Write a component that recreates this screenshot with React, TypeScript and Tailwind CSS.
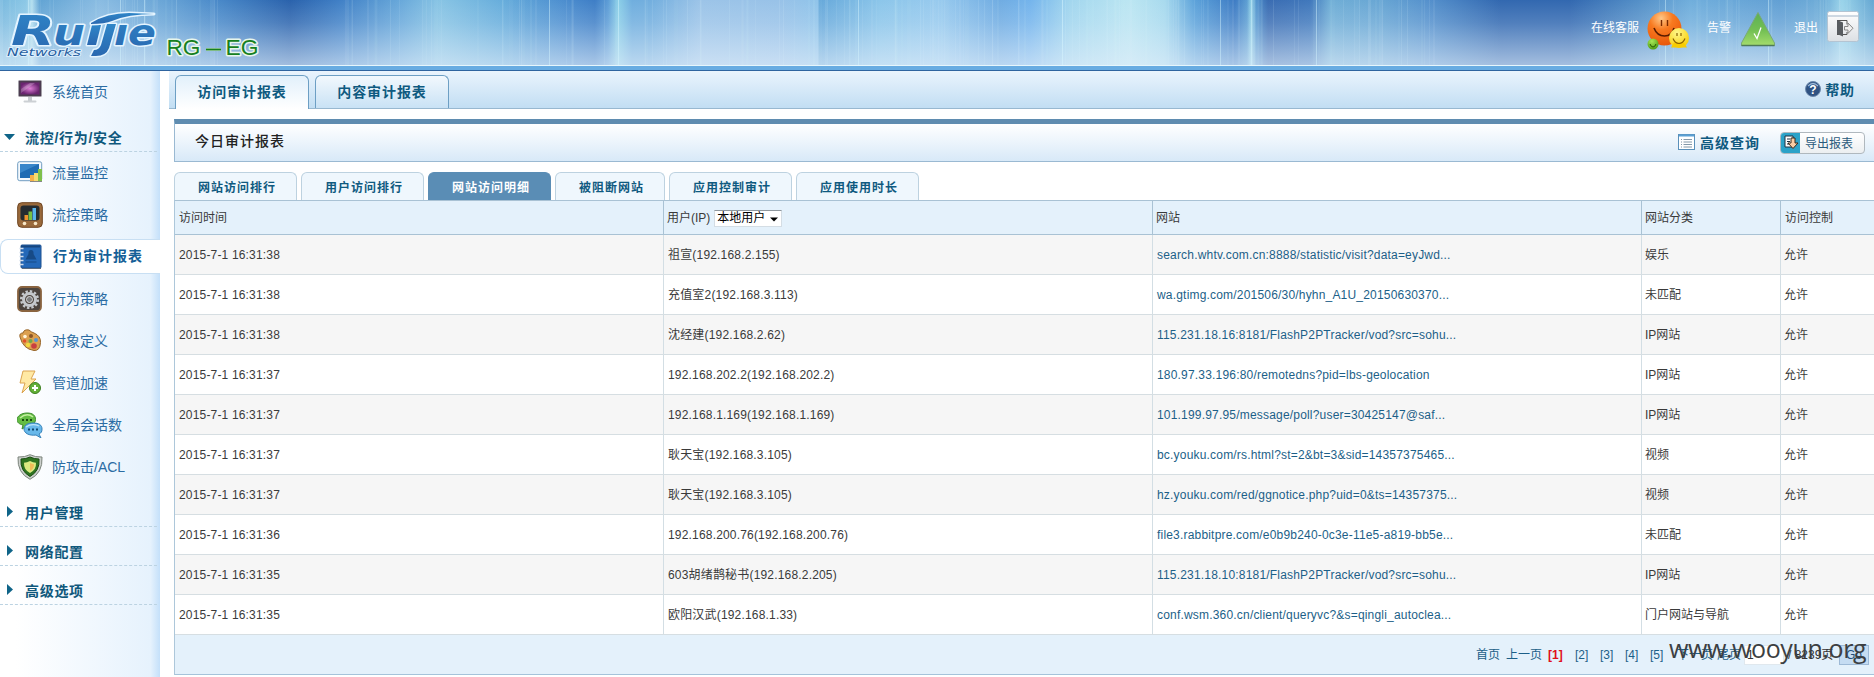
import React from "react";

const FONT = "font-['Liberation_Sans','Noto_Sans_CJK_SC',sans-serif]";

type Stop = [number, string];

const SKY: Stop[] = [
  [0, "#78b8de"], [26, "#8cc8e6"], [32, "#b0dcee"], [40, "#62a4d4"], [100, "#8abce2"], [165, "#68a4d6"], [220, "#4888c8"],
  [290, "#2a62ac"], [340, "#4080c6"], [400, "#68a8da"], [440, "#88c4e4"], [500, "#68aedc"], [560, "#4e90d0"],
  [595, "#3e7ec6"], [608, "#5c9cd6"], [618, "#8cd0e8"], [632, "#70aede"], [650, "#72aede"], [700, "#9cc4e8"],
  [780, "#98c2e8"], [818, "#90c4ea"], [819, "#66a8da"], [880, "#8cc6ea"], [940, "#98caee"], [1000, "#70ace2"],
  [1030, "#74b4ec"], [1070, "#a2d6ee"], [1130, "#bce6f2"], [1165, "#a8daee"], [1195, "#5ca2da"], [1235, "#3e7cc4"],
  [1247, "#5c9ed2"], [1251, "#90d0e6"], [1257, "#4e90cc"], [1268, "#3a6cb2"], [1310, "#4078bc"], [1330, "#70aed6"],
  [1380, "#68a6d4"], [1430, "#5490cc"], [1500, "#3268b0"], [1570, "#3268b0"], [1640, "#5490c8"], [1690, "#70aedc"],
  [1780, "#62a0d4"], [1825, "#70aed8"], [1842, "#9ad4ea"], [1874, "#64a6d2"],
];

const LINES = Array.from({ length: 260 }, (_, i) => {
  const n = Math.abs(Math.sin(i * 12.9898) * 43758.5453) % 1;
  const m = Math.abs(Math.sin(i * 78.233) * 12543.123) % 1;
  return { x: Math.floor(n * 1874), w: m > 0.85 ? 4 : m > 0.5 ? 2 : 1, o: 0.03 + (1 - m) * 0.1 };
}).filter((l) => !(l.x > 235 && l.x < 345) && !(l.x > 1450 && l.x < 1620));

const STRONG = [28, 120, 144, 549, 618, 858, 1062, 1220, 1251, 1316, 1665, 1768];

function HeaderArt() {
  return (
    <svg className="absolute inset-0 h-[65px] w-full" viewBox="0 0 1874 65" preserveAspectRatio="none">
      <defs>
        <linearGradient id="sky" x1="0" x2="1" y1="0" y2="0">
          {SKY.map(([x, c]) => (
            <stop key={x} offset={x / 1874} stopColor={c} />
          ))}
        </linearGradient>
        <linearGradient id="haze" x1="0" x2="0" y1="0" y2="1">
          <stop offset="0" stopColor="#e4f2fc" stopOpacity="0" />
          <stop offset="0.35" stopColor="#e4f0fb" stopOpacity="0.17" />
          <stop offset="1" stopColor="#e4effa" stopOpacity="0.64" />
        </linearGradient>
      </defs>
      <rect width="1874" height="65" fill="url(#sky)" />
      <rect width="1874" height="65" fill="url(#haze)" />
      {LINES.map((l, i) => (
        <rect key={i} x={l.x} y="0" width={l.w} height="65" fill="#e0f8ff" opacity={l.o} />
      ))}
      {STRONG.map((x) => (
        <rect key={x} x={x} y="0" width="1" height="65" fill="#d8f6ff" opacity="0.45" />
      ))}
    </svg>
  );
}

function Logo() {
  const word = {
    fontFamily: "'DejaVu Sans'",
    fontWeight: 700,
    fontStyle: "italic",
  } as const;
  return (
    <svg className="h-[60px] w-[160px] shrink-0" viewBox="0 0 160 60">
      <defs>
        <linearGradient id="lg" x1="0" x2="0" y1="0" y2="1">
          <stop offset="0" stopColor="#2f86c8" />
          <stop offset="1" stopColor="#2a68b0" />
        </linearGradient>
      </defs>
      <g stroke="#e4f4ff" strokeWidth="3" strokeLinejoin="round" paintOrder="stroke" fill="url(#lg)">
        <text {...word} x="11" y="45" fontSize="41" textLength="44" lengthAdjust="spacingAndGlyphs">R</text>
        <text {...word} x="53" y="45" fontSize="35" textLength="32" lengthAdjust="spacingAndGlyphs">u</text>
        <text {...word} x="114" y="45" fontSize="35" textLength="42" lengthAdjust="spacingAndGlyphs">ıe</text>
        <path d="M92 25h9l-5 20h-9z" />
        <path d="M107 24h9l-7 24q-3 8-13 8h-5l3-6q5 0 7-5z" />
        <path d="M91 23q16-10 38-10l25 1q-26 0-42 7-7 3-21 3z" />
      </g>
      <text
        x="7" y="56" fontSize="11" fontFamily="'DejaVu Sans'" fontStyle="italic"
        textLength="74" lengthAdjust="spacingAndGlyphs" fill="#285f9f" stroke="#e4f3ff" strokeWidth="1.500" paintOrder="stroke"
      >
        Networks
      </text>
    </svg>
  );
}

function Smileys() {
  return (
    <svg className="h-[40px] w-[44px]" viewBox="0 0 44 40">
      <defs>
        <radialGradient id="or" cx=".4" cy=".2" r=".85"><stop offset="0" stopColor="#ffc888" /><stop offset=".4" stopColor="#f87a20" /><stop offset="1" stopColor="#e85408" /></radialGradient>
        <radialGradient id="ye" cx=".4" cy=".25" r=".8"><stop offset="0" stopColor="#fff78a" /><stop offset="1" stopColor="#f8cc00" /></radialGradient>
        <radialGradient id="gr" cx=".4" cy=".25" r=".8"><stop offset="0" stopColor="#a8e858" /><stop offset="1" stopColor="#4a9a10" /></radialGradient>
      </defs>
      <circle cx="18.500" cy="17.500" r="17" fill="url(#or)" />
      <path d="M15.500 9v6M21.500 9v6" stroke="#7a2a00" strokeWidth="1.400" />
      <path d="M8 17q3 8 10.500 8T28 17" fill="none" stroke="#5a1c00" strokeWidth="1.600" />
      <circle cx="33" cy="27" r="10" fill="url(#ye)" />
      <path d="M25 36.500h16l-3-5H28z" fill="#f8cc00" />
      <path d="M31 22v3M35 22v3M27 27.500q2 5 6 5t6-5" fill="none" stroke="#8a6200" strokeWidth="1.200" />
      <circle cx="7" cy="33" r="5.500" fill="url(#gr)" />
      <path d="M4 33q1 3 3 3t3-3" fill="none" stroke="#275c00" />
    </svg>
  );
}

function AlarmIcon() {
  return (
    <svg className="h-[36px] w-[36px]" viewBox="0 0 36 36">
      <defs><linearGradient id="tri" x1="0" x2="0" y1="0" y2="1"><stop offset="0" stopColor="#5cb054" /><stop offset=".55" stopColor="#74c054" /><stop offset="1" stopColor="#a4dc6c" /></linearGradient></defs>
      <path d="M18 1.500L34.500 32v2.500h-33V32z" fill="url(#tri)" stroke="#7aa87a" strokeLinejoin="round" />
      <path d="M1.500 34.500h33" stroke="#4e7a58" strokeWidth="1.500" />
      <path d="M14 22.500l3 5 4-11" fill="none" stroke="#fff" strokeWidth="1.300" />
    </svg>
  );
}

function ExitIcon() {
  return (
    <svg className="h-[31px] w-[32px]" viewBox="0 0 32 31">
      <defs><linearGradient id="ex" x1="0" x2="0" y1="0" y2="1"><stop offset="0" stopColor="#fff" /><stop offset="1" stopColor="#dce0e4" /></linearGradient></defs>
      <rect x=".5" y=".5" width="31" height="30" rx="2" fill="url(#ex)" stroke="#b4c4d2" />
      <path d="M1 5h30" stroke="#a0b4c8" />
      <path d="M10 9.500h10v4M20 21v2.500H10" fill="none" stroke="#555" />
      <path d="M10 9l6 2.500v14l-6-2.500z" fill="#585c60" />
      <path d="M17.500 15.500h3.500V12l5 5.200-5 5.200V19h-3.500z" fill="#f0f0f0" stroke="#888" />
    </svg>
  );
}

const ICONS: Record<string, React.ReactNode> = {
  monitor: (
    <>
      <defs><radialGradient id="mo"><stop offset="0" stopColor="#e080d8" /><stop offset="1" stopColor="#6a2470" /></radialGradient></defs>
      <rect x="1.500" y="1.500" width="23" height="16" rx="1" fill="#4c3c50" stroke="#a4a0a8" />
      <rect x="3.500" y="3.500" width="19" height="12" fill="url(#mo)" />
      <path d="M4 14L18 4h-5L4 10z" fill="#fff" opacity=".22" />
      <path d="M11 18h4v4h-4z" fill="#c8ccd0" /><rect x="6.500" y="21.500" width="13" height="2" rx="1" fill="#ccd0d4" />
    </>
  ),
  flow: (
    <>
      <rect x=".7" y="1.700" width="24" height="19" rx="2" fill="#f4f9fd" stroke="#6f9cc0" />
      <rect x="3" y="4" width="19" height="14" fill="#1f6cb4" /><path d="M3 4h19L3 13z" fill="#4c9cdc" opacity=".55" />
      <path d="M13 15h4v7h-4z" fill="#f4b04a" /><path d="M17 13h4v9h-4z" fill="#f6dc70" /><path d="M21 9h4v13h-4z" fill="#7fc04c" />
      <path d="M13 21.500h12" stroke="#888" />
    </>
  ),
  policy: (
    <>
      <rect x=".7" y=".7" width="24.600" height="24.600" rx="4" fill="#9a6a3c" stroke="#6e4420" />
      <rect x="3.500" y="3.500" width="19" height="15" rx="3" fill="#262c30" />
      <path d="M7.500 13h3.500v5H7.500z" fill="#f0922c" /><path d="M11.500 9.500H15V18h-3.500z" fill="#78c044" /><path d="M15.500 6H19v12h-3.500z" fill="#58b4ec" />
      <circle cx="7.500" cy="21.500" r="1.800" fill="#f8e8c8" /><circle cx="18.500" cy="21.500" r="1.800" fill="#f8e8c8" />
    </>
  ),
  book: (
    <>
      <rect x="3" y="1" width="20" height="23" rx="1" fill="#2468b8" stroke="#1c5090" />
      <path d="M3 2.500h19" stroke="#164680" strokeWidth="2" /><path d="M4 24.500h19" stroke="#5c6c80" />
      <path d="M13 6q3 0 2.500 4l3 5.500h-11l3-5.500Q10 6 13 6z" fill="#174a86" />
      <path d="M7.500 18h11" stroke="#174a86" />
      <path d="M1.500 4.500h4M1.500 8.500h4M1.500 12.500h4M1.500 16.500h4M1.500 20.500h4" stroke="#d0dcec" strokeWidth="1.500" />
    </>
  ),
  gear: (
    <>
      <rect x="1" y="1" width="23" height="24" rx="4" fill="#4c443e" stroke="#8a6440" strokeWidth="1.800" />
      <circle cx="12.500" cy="13.500" r="6" fill="none" stroke="#c4c8cc" strokeWidth="3" />
      <circle cx="12.500" cy="13.500" r="8.300" fill="none" stroke="#c4c8cc" strokeWidth="2.500" strokeDasharray="2.400 1.950" />
      <circle cx="12.500" cy="13.500" r="3" fill="#7c7e80" stroke="#d8dadc" />
    </>
  ),
  palette: (
    <>
      <path d="M3 9q-1-4 3-4 1-4 6-3 2 2 5 3 7 3 6.500 9.500Q23 23 17 22.500 6 21 3 9z" fill="#dca050" stroke="#966428" />
      <circle cx="8" cy="8.500" r="1.800" fill="#fff4dc" /><circle cx="7.500" cy="13" r="1.800" fill="#e0502c" /><circle cx="14" cy="8" r="2" fill="#8a5426" />
      <circle cx="19" cy="12" r="2" fill="#5894d0" /><circle cx="11" cy="17" r="2.200" fill="#f0d840" /><circle cx="17" cy="18" r="2.800" fill="#c84040" />
      <circle cx="13.500" cy="13" r="2" fill="#70a848" />
    </>
  ),
  bolt: (
    <>
      <path d="M6 1h12l-4 8h5L5 23l3-10H3z" fill="#ffe9a4" stroke="#dca450" strokeLinejoin="round" />
      <circle cx="18" cy="18" r="5.500" fill="#64b038" stroke="#3c8020" /><path d="M18 15v6M15 18h6" stroke="#fff" strokeWidth="2" />
    </>
  ),
  chat: (
    <>
      <path d="M10 1c6 0 8.500 2.500 8.500 6.500s-4 6.500-8.500 6.500l-5 3 1-4C2 12 0 10.500 0 7.500S4 1 10 1z" fill="#64bc44" stroke="#3c8c2c" />
      <path d="M3 6q7-6 13-1" stroke="#c4f0a0" fill="none" strokeWidth="1.500" />
      <path d="M5 8h2M9 8h2M13 8h2" stroke="#184c10" strokeWidth="2" />
      <path d="M16 11c6 0 9 2 9 6 0 3-1 4-3 5l2 4-5-3c-7 1-12-2-12-6s4-6 9-6z" fill="#68b8ea" stroke="#3480b8" />
      <path d="M9 15q6-4 13-1" stroke="#c0e4fa" fill="none" strokeWidth="1.300" />
      <path d="M11 17.500h2M15 17.500h2M19 17.500h2" stroke="#104870" strokeWidth="2" />
    </>
  ),
  shield: (
    <>
      <path d="M13 .7q5 2.600 12 2.300Q26 19 13 25.300 0 19 1 3 8 3.300 13 .7z" fill="#ccd0cc" stroke="#7c847c" />
      <path d="M13 3q4 2 9 2 1 12-9 17.500Q3 17 4 5q5 0 9-2z" fill="#2f7420" stroke="#184c10" />
      <path d="M13 7q3 1.500 6 1.700.500 6.800-6 10.300Q6.500 15.500 7 8.700 10 8.500 13 7z" fill="#dcea80" /><path d="M13 9q2 1 4 1.200.3 4.500-4 6.800z" fill="#f0bc58" />
    </>
  ),
};

function SideItem({ icon, label, active }: { icon: string; label: string; active?: boolean }) {
  return (
    <div className="flex h-[42px] items-center">
      <div
        className={
          active
            ? "mb-[1px] flex h-[35px] w-full items-center rounded-l-lg border-y border-l border-[#c8dff3] bg-white pl-[17px] text-[14px] font-bold tracking-[1px] text-[#155f97]"
            : "flex h-[34px] w-full items-center pl-[17px] text-[14px] text-[#2b6ca3]"
        }
      >
        <svg className="mr-[9px] h-[26px] w-[26px] shrink-0" viewBox="0 0 26 26">{ICONS[icon]}</svg>
        <span className="whitespace-nowrap">{label}</span>
      </div>
    </div>
  );
}

function SideGroup({ label, open }: { label: string; open?: boolean }) {
  return (
    <div className="mr-[3px] flex h-full items-center border-b border-dashed border-[#bcd3e2] text-[14px] font-bold tracking-[0.7px] text-[#0f587c]">
      <svg className="mb-[3px] h-[12px] w-[25px] shrink-0" viewBox="0 0 25 12">
        {open ? <path d="M4 3h11L9.500 9z" fill="#0f6488" /> : <path d="M7 0v11l6-5.500z" fill="#0f6488" />}
      </svg>
      <span className="whitespace-nowrap">{label}</span>
    </div>
  );
}

const ITEMS: [string, string][] = [
  ["flow", "流量监控"],
  ["policy", "流控策略"],
  ["book", "行为审计报表"],
  ["gear", "行为策略"],
  ["palette", "对象定义"],
  ["bolt", "管道加速"],
  ["chat", "全局会话数"],
  ["shield", "防攻击/ACL"],
];

const SUBTABS: [string, string][] = [
  ["网站访问排行", "w-[123px]"],
  ["用户访问排行", "w-[123px]"],
  ["网站访问明细", "w-[123px]"],
  ["被阻断网站", "w-[110px]"],
  ["应用控制审计", "w-[123px]"],
  ["应用使用时长", "w-[123px]"],
];

const ROWS: string[][] = [
  ["2015-7-1 16:31:38", "祖宣(192.168.2.155)", "search.whtv.com.cn:8888/statistic/visit?data=eyJwd...", "娱乐"],
  ["2015-7-1 16:31:38", "充值室2(192.168.3.113)", "wa.gtimg.com/201506/30/hyhn_A1U_20150630370...", "未匹配"],
  ["2015-7-1 16:31:38", "沈经建(192.168.2.62)", "115.231.18.16:8181/FlashP2PTracker/vod?src=sohu...", "IP网站"],
  ["2015-7-1 16:31:37", "192.168.202.2(192.168.202.2)", "180.97.33.196:80/remotedns?pid=lbs-geolocation", "IP网站"],
  ["2015-7-1 16:31:37", "192.168.1.169(192.168.1.169)", "101.199.97.95/message/poll?user=30425147@saf...", "IP网站"],
  ["2015-7-1 16:31:37", "耿天宝(192.168.3.105)", "bc.youku.com/rs.html?st=2&bt=3&sid=14357375465...", "视频"],
  ["2015-7-1 16:31:37", "耿天宝(192.168.3.105)", "hz.youku.com/red/ggnotice.php?uid=0&ts=14357375...", "视频"],
  ["2015-7-1 16:31:36", "192.168.200.76(192.168.200.76)", "file3.rabbitpre.com/e0b9b240-0c3e-11e5-a819-bb5e...", "未匹配"],
  ["2015-7-1 16:31:35", "603胡绪鹊秘书(192.168.2.205)", "115.231.18.10:8181/FlashP2PTracker/vod?src=sohu...", "IP网站"],
  ["2015-7-1 16:31:35", "欧阳汉武(192.168.1.33)", "conf.wsm.360.cn/client/queryvc?&s=qingli_autoclea...", "门户网站与导航"],
];

const COLS = "grid grid-cols-[489px_489px_489px_139px_1fr]";

export default function App() {
  return (
    <div className={`flex h-[677px] w-full flex-col overflow-hidden bg-white text-[12px] text-[#3a3a3a] ${FONT}`}>
      <header className="relative h-[71px] shrink-0">
        <HeaderArt />
        <div className="relative flex h-[65px]">
          <Logo />
          <svg className="mt-[32px] h-[30px] w-[110px]" viewBox="0 0 110 30">
            <g fontFamily="'Liberation Sans'" fontSize="22" fill="#16801f" stroke="#e8f6ec" strokeWidth="3" strokeLinejoin="round" paintOrder="stroke">
              <text x="6.500" y="23" textLength="34" lengthAdjust="spacingAndGlyphs">RG</text>
              <path d="M46 17.500h15" />
              <text x="65.500" y="23" textLength="33" lengthAdjust="spacingAndGlyphs">EG</text>
            </g>
            <g fontFamily="'Liberation Sans'" fontSize="22" fill="none" stroke="#16801f" strokeWidth=".6" aria-hidden="true">
              <path d="M46 17.500h15" strokeWidth="2" />
            </g>
          </svg>
          <div className="ml-auto flex pt-[11px] text-white">
            <span className="mr-[7px] pt-[8px]">在线客服</span>
            <Smileys />
            <span className="mr-[9px] ml-[17px] pt-[8px]">告警</span>
            <AlarmIcon />
            <span className="mr-[9px] ml-[18px] pt-[8px]">退出</span>
            <span className="mr-[15px]"><ExitIcon /></span>
          </div>
        </div>
        <div className="relative h-px bg-[#e6f6fc]" />
        <div className="relative h-[4px] bg-[#68ace2]" />
        <div className="relative h-px bg-[#2f649f]" />
      </header>

      <div className="flex flex-1">
        <aside className="w-[160px] shrink-0 bg-linear-to-r from-white from-10% via-[#e6f2fd] via-94% to-[#c4e0fa]">
          <div className="h-[42px]"><SideItem icon="monitor" label="系统首页" /></div>
          <div className="mt-[12px] h-[27px]"><SideGroup label="流控/行为/安全" open /></div>
          {ITEMS.map(([icon, label]) => (
            <SideItem key={icon} icon={icon} label={label} active={icon === "book"} />
          ))}
          <div className="mt-[12px] h-[27px]"><SideGroup label="用户管理" /></div>
          <div className="mt-[12px] h-[27px]"><SideGroup label="网络配置" /></div>
          <div className="mt-[12px] h-[27px]"><SideGroup label="高级选项" /></div>
        </aside>

        <main className="flex min-w-0 flex-1 flex-col pl-[9px]">
          <div className="flex h-[38px] items-end border-b border-[#98b8d0] bg-linear-to-b from-[#eaf4fd] to-[#c2def3] pl-[6px] text-[14px] font-bold tracking-[0.9px] text-[#0f5a80]">
            <div className="-mb-px flex h-[34px] w-[134px] items-center justify-center rounded-t-md border border-b-0 border-[#6d9fc4] bg-linear-to-b from-[#e2f0fb] to-white">
              访问审计报表
            </div>
            <div className="ml-[6px] flex h-[33px] w-[134px] items-center justify-center rounded-t-md border border-b-0 border-[#6d9fc4] bg-linear-to-b from-[#f2f8fd] to-[#c9e2f5]">
              内容审计报表
            </div>
            <div className="mr-[19px] ml-auto flex h-[37px] items-center pt-[1px]">
              <svg className="mr-[4px] mb-[2px] h-[16px] w-[16px]" viewBox="0 0 16 16">
                <circle cx="8" cy="8" r="7.500" fill="#2f5282" stroke="#6c88ac" />
                <path d="M3 5q5-5 10 0" fill="none" stroke="#9cb8d8" strokeWidth="1.200" />
                <text x="8" y="12.500" fontSize="12" fontWeight="700" fill="#fff" textAnchor="middle" letterSpacing="0">?</text>
              </svg>
              帮助
            </div>
          </div>

          <div className="mt-[10px] ml-[5px] flex h-[43px] items-center border-t-[5px] border-b border-l border-t-[#5f8cb0] border-b-[#9ab9d2] border-l-[#9ab9d2] bg-linear-to-b from-white to-[#d8e9f8] pl-[20px] text-[14px] tracking-[1px]">
            <span className="pb-[3px] font-medium text-[#222]">今日审计报表</span>
            <svg className="mr-[5px] mb-[1px] ml-auto h-[16px] w-[17px]" viewBox="0 0 17 16">
              <rect x=".5" y=".5" width="16" height="15" fill="#fff" stroke="#5a90ba" />
              <path d="M1 1.500h15" stroke="#5aa0d4" strokeWidth="2" />
              <path d="M3 5.500h1M3 8h1M3 10.500h1M3 13h1M5.500 5.500H14M5.500 8H14M5.500 10.500H14M5.500 13H14" stroke="#8498a8" />
            </svg>
            <span className="pt-[1px] font-bold text-[#0f5a80]">高级查询</span>
            <div className="mr-[9px] ml-[20px] flex h-[22px] w-[85px] items-center overflow-hidden rounded-[4px] border border-[#b0b8be] bg-linear-to-b from-white to-[#eceff1] text-[12px] tracking-normal text-[#2a5a7c]">
              <svg className="h-[22px] w-[19px] shrink-0" viewBox="0 0 19 22">
                <rect width="19" height="22" fill="#2ba2c8" />
                <path d="M4 4h8v11H4z" fill="#fff" stroke="#203040" />
                <path d="M6 7h3M6 9.500h3M6 12h3" stroke="#203040" />
                <path d="M10 6h4v5h3l-5 5.500L7 11h3z" fill="#f8cca4" stroke="#3c2818" />
              </svg>
              <span className="pt-[3px] pl-[5px] whitespace-nowrap">导出报表</span>
            </div>
          </div>

          <div className="mt-[10px] ml-[5px] flex gap-[4px]">
            {SUBTABS.map(([label, w], i) => (
              <div
                key={label}
                className={
                  i === 2
                    ? `${w} flex h-[28px] items-center rounded-t-[6px] border border-b-0 border-[#5a8db5] bg-[#5a8db5] pt-[3px] pl-[23px] font-bold tracking-[1px] text-white`
                    : `${w} flex h-[28px] items-center rounded-t-[6px] border border-b-0 border-[#bdd2e0] bg-[#eff7fd] pt-[3px] pl-[23px] font-bold tracking-[1px] text-[#0f5a80]`
                }
              >
                {label}
              </div>
            ))}
          </div>

          <div className="ml-[5px] border-l border-[#adc7da]">
            <div className={`${COLS} h-[35px] border-y border-[#a9c2d4] bg-[#e4f1fb]`}>
              <div className="flex items-center border-r border-[#a9c2d4] pt-[1px] pl-[4px]">访问时间</div>
              <div className="flex items-center border-r border-[#a9c2d4] pt-[1px] pl-[3px]">
                用户(IP)
                <div className="ml-[4px] flex h-[17px] w-[68px] items-center border border-[#d4dde4] border-t-[#8e979e] bg-white pl-[2px] text-black">
                  本地用户
                  <svg className="mt-[2px] ml-[5px] h-[5px] w-[8px]" viewBox="0 0 8 5"><path d="M0 .5h8L4 4.500z" /></svg>
                </div>
              </div>
              <div className="flex items-center border-r border-[#a9c2d4] pt-[1px] pl-[3px]">网站</div>
              <div className="flex items-center border-r border-[#a9c2d4] pt-[1px] pl-[3px]">网站分类</div>
              <div className="flex items-center pt-[1px] pl-[4px]">访问控制</div>
            </div>
            {ROWS.map((r, i) => (
              <div key={i} className={`${COLS} h-[40px] border-b border-[#d6dee2] ${i % 2 ? "bg-white" : "bg-[#f6f6f6]"}`}>
                <div className="flex items-center border-r border-[#d3dee4] pl-[4px] tracking-[0.17px]">{r[0]}</div>
                <div className="flex items-center border-r border-[#d3dee4] pl-[4px] tracking-[0.18px]">{r[1]}</div>
                <div className="flex items-center border-r border-[#d3dee4] pl-[4px] tracking-[0.19px] text-[#1c5f88]">{r[2]}</div>
                <div className="flex items-center border-r border-[#d3dee4] pt-[1px] pl-[3px]">{r[3]}</div>
                <div className="flex items-center pt-[1px] pl-[3px]">允许</div>
              </div>
            ))}
            <div className="relative flex h-[40px] items-center border-b border-[#a5c3da] bg-[#e4f1fb] text-[#1c5f88]">
              <div className="ml-[1301px] flex items-center whitespace-nowrap">
                <span className="w-[30px]">首页</span>
                <span className="w-[42px]">上一页</span>
                <span className="w-[27px] font-bold text-[#e00f1c]">[1]</span>
                <span className="w-[25px]">[2]</span>
                <span className="w-[25px]">[3]</span>
                <span className="w-[25px]">[4]</span>
                <span className="w-[27px]">[5]</span>
                <span className="w-[40px]">下一页</span>
                <span className="w-[27px]">尾页</span>
                <span className="flex h-[20px] w-[40px] items-center border border-[#e0e8ee] bg-white pl-[2px] text-[#333]">1</span>
                <span className="w-[55px] pl-[4px] text-[#333]">/ 8239页</span>
                <span className="flex h-[20px] w-[30px] items-center justify-center border border-[#9db9d6] bg-[#c5dcf2] text-[#24507c]">Go</span>
              </div>
              <span className="absolute top-[-6px] left-[1494px] font-['Open_Sans','Noto_Sans',sans-serif] text-[25px] leading-[38px] tracking-[-0.4px] text-[#3c3f42]">
                www.wooyun.org
              </span>
            </div>
          </div>
        </main>
      </div>
    </div>
  );
}
